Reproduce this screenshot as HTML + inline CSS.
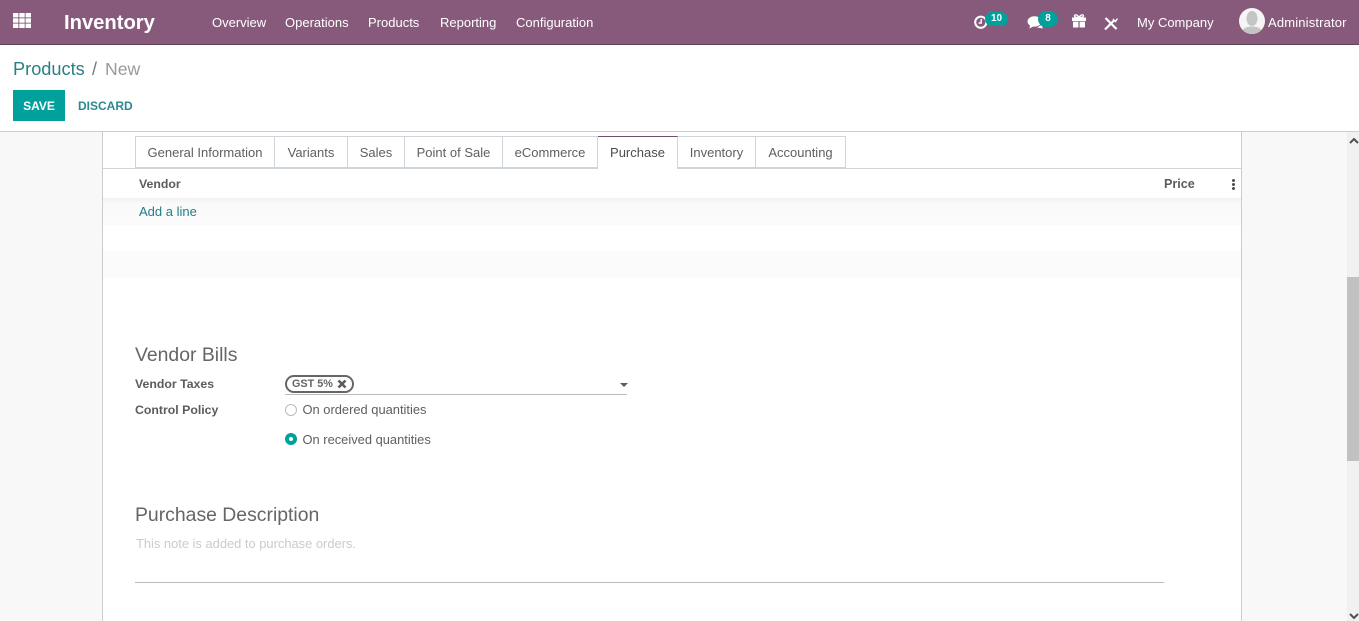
<!DOCTYPE html>
<html lang="en">
<head>
<meta charset="utf-8">
<title>Products / New</title>
<style>
html,body{margin:0;padding:0;width:1359px;height:621px;overflow:hidden;background:#fff;}
body{font-family:"Liberation Sans",sans-serif;font-size:13px;color:#4c4c4c;position:relative;}
.a{position:absolute;white-space:nowrap;}
.box{position:absolute;}
.nav{color:#fff;font-size:13px;top:15px;line-height:16px;}
.tab{position:absolute;top:136px;height:32px;box-sizing:border-box;border:1px solid #ced4da;border-left:0;background:#fff;text-align:center;line-height:32px;color:#5f5f5f;font-size:13px;}
.b{font-weight:bold;color:#5f5a5c;font-size:12.3px;line-height:14px;}
.h{font-size:19.4px;color:#666;line-height:24px;}
</style>
</head>
<body>
<!-- content background -->
<div class="box" style="left:0;top:132px;width:1359px;height:489px;background:#f8f8f8;"></div>
<div class="box" style="left:102px;top:132px;width:1138px;height:489px;background:#fff;border-left:1px solid #ccc;border-right:1px solid #ccc;box-sizing:content-box;"></div>

<!-- top bar -->
<div class="box" style="left:0;top:0;width:1359px;height:45px;background:#875a7b;border-bottom:1px solid #5f4558;box-sizing:border-box;"></div>
<svg class="box" style="left:13px;top:13px;" width="18" height="15" viewBox="0 0 18 15" fill="#fff">
<rect x="0" y="0" width="5.4" height="4.4"/><rect x="6.3" y="0" width="5.4" height="4.4"/><rect x="12.6" y="0" width="5.4" height="4.4"/>
<rect x="0" y="5.3" width="5.4" height="4.4"/><rect x="6.3" y="5.3" width="5.4" height="4.4"/><rect x="12.6" y="5.3" width="5.4" height="4.4"/>
<rect x="0" y="10.6" width="5.4" height="4.4"/><rect x="6.3" y="10.6" width="5.4" height="4.4"/><rect x="12.6" y="10.6" width="5.4" height="4.4"/>
</svg>
<div class="a" style="left:64px;top:10px;color:#fff;font-size:20.2px;font-weight:bold;line-height:27px;">Inventory</div>
<div class="a nav" style="left:212px;">Overview</div>
<div class="a nav" style="left:285px;">Operations</div>
<div class="a nav" style="left:368px;">Products</div>
<div class="a nav" style="left:440px;">Reporting</div>
<div class="a nav" style="left:516px;">Configuration</div>

<!-- systray -->
<svg class="box" style="left:974px;top:15px;" width="14" height="14" viewBox="0 0 14 14" fill="none" stroke="#fff">
<circle cx="6.8" cy="7.2" r="5.6" stroke-width="2"/>
<path d="M7.2 4V8H4.6" stroke-width="1.4"/>
</svg>
<div class="a" style="left:985px;top:12px;width:23px;height:14px;border-radius:7px;background:#00a09d;color:#fff;font-size:10px;font-weight:bold;text-align:center;line-height:14px;">10</div>
<svg class="box" style="left:1027px;top:15px;" width="18" height="15" viewBox="0 0 18 15" fill="#fff">
<ellipse cx="7.5" cy="6.5" rx="7" ry="5.2"/>
<path d="M3 10L2.500 13.500L7 11Z"/>
<path d="M10 12.500L16 13.500L14.500 10Z"/>
</svg>
<div class="a" style="left:1038px;top:11px;width:20px;height:16px;border-radius:8px;background:#00a09d;color:#fff;font-size:10px;font-weight:bold;text-align:center;line-height:16px;">8</div>
<svg class="box" style="left:1072px;top:14px;" width="14" height="14" viewBox="0 0 14 14" fill="#fff">
<rect x="0" y="3.5" width="14" height="3.5"/>
<rect x="1" y="7.6" width="5.4" height="5.9"/>
<rect x="7.6" y="7.6" width="5.4" height="5.9"/>
<path d="M7 3.5C5.500 .5 2.500 0 2.500 2C2.500 3.200 4 3.500 7 3.500C10 3.500 11.500 3.200 11.500 2C11.500 0 8.500 .5 7 3.500Z" fill="none" stroke="#fff" stroke-width="1.3"/>
</svg>
<svg class="box" style="left:1104px;top:17px;" width="14" height="13" viewBox="0 0 14 13" fill="none" stroke="#fff">
<path d="M1 12.500L10.500 3" stroke-width="2.2"/>
<path d="M9 2L11.500 4.500L13.500 1.500" stroke-width="1.4"/>
<path d="M1.500 1L12.500 12" stroke-width="2.2"/>
</svg>
<div class="a nav" style="left:1137px;">My Company</div>
<div class="box" style="left:1239px;top:8px;width:26px;height:26px;border-radius:50%;background:#f5f5f5;overflow:hidden;">
<svg width="26" height="26" viewBox="0 0 26 26"><ellipse cx="13" cy="10.500" rx="5.500" ry="7.500" fill="#c4c4c4"/><path d="M2 26C3 20 8 18.500 13 18.500S23 20 24 26Z" fill="#c4c4c4"/></svg>
</div>
<div class="a nav" style="left:1268px;letter-spacing:.16px;">Administrator</div>

<!-- control panel -->
<div class="box" style="left:0;top:45px;width:1359px;height:87px;background:#fff;border-bottom:1px solid #ccc;box-sizing:border-box;"></div>
<div class="a" style="left:13px;top:57px;font-size:18.2px;line-height:24px;color:#2b7f85;">Products</div>
<div class="a" style="left:92px;top:57px;font-size:18px;line-height:24px;color:#777;">/</div>
<div class="a" style="left:105px;top:57px;font-size:17.6px;line-height:24px;color:#999;">New</div>
<div class="a" style="left:13px;top:90px;width:52px;height:31px;background:#00a09d;color:#fff;font-size:12px;font-weight:bold;text-align:center;line-height:32px;">SAVE</div>
<div class="a" style="left:78px;top:90px;font-size:12px;font-weight:bold;color:#2b8a90;line-height:32px;">DISCARD</div>

<!-- tabs -->
<div class="box" style="left:103px;top:168px;width:1138px;height:1px;background:#ced4da;"></div>
<div class="tab" style="left:135px;width:140px;border-left:1px solid #ced4da;">General Information</div>
<div class="tab" style="left:275px;width:73px;">Variants</div>
<div class="tab" style="left:348px;width:57px;">Sales</div>
<div class="tab" style="left:405px;width:98px;">Point of Sale</div>
<div class="tab" style="left:503px;width:95px;">eCommerce</div>
<div class="tab" style="left:598px;width:80px;height:33px;border-top:1px solid #6f4f67;border-bottom:0;border-left:0;color:#4c4c4c;">Purchase</div>
<div class="tab" style="left:678px;width:78px;">Inventory</div>
<div class="tab" style="left:756px;width:90px;">Accounting</div>

<!-- vendor table -->
<div class="a b" style="left:139px;top:177px;">Vendor</div>
<div class="a b" style="left:1164px;top:177px;font-size:12.6px;">Price</div>
<div class="box" style="left:1232px;top:179px;width:3px;height:3px;background:#4c4c4c;border-radius:50%;box-shadow:0 4px 0 #4c4c4c,0 8px 0 #4c4c4c;"></div>
<div class="box" style="left:103px;top:198px;width:1138px;height:27px;background:linear-gradient(#f1f1f1 0,#fafafa 6px,#fbfbfb 100%);"></div>
<div class="box" style="left:103px;top:251px;width:1138px;height:27px;background:#fbfbfb;"></div>
<div class="a" style="left:139px;top:204px;color:#1f7f85;font-size:13px;line-height:15px;">Add a line</div>

<!-- vendor bills -->
<div class="a h" style="left:135px;top:343px;">Vendor Bills</div>
<div class="a b" style="left:135px;top:377px;">Vendor Taxes</div>
<div class="a" style="left:285px;top:375px;width:69px;height:18px;box-sizing:border-box;border:2px solid #6b6467;border-radius:9px;"></div>
<div class="a" style="left:292px;top:377px;font-size:10.8px;font-weight:bold;color:#666;line-height:14px;">GST 5%</div>
<svg class="box" style="left:337px;top:379px;" width="10" height="10" viewBox="0 0 10 10"><path d="M1.500 1.500L8.500 8.500M8.500 1.500L1.500 8.500" stroke="#5f5a5c" stroke-width="2.6"/></svg>
<div class="box" style="left:285px;top:394px;width:342px;height:1px;background:#bbb;"></div>
<div class="box" style="left:620px;top:383px;width:0;height:0;border-left:4px solid transparent;border-right:4px solid transparent;border-top:4px solid #5f5a5c;"></div>

<div class="a b" style="left:135px;top:403px;">Control Policy</div>
<div class="box" style="left:285px;top:404px;width:12px;height:12px;box-sizing:border-box;border:1px solid #bbb;border-radius:50%;background:#fff;"></div>
<div class="a" style="left:302.500px;top:402px;line-height:15px;color:#5f5f5f;font-size:12.9px;">On ordered quantities</div>
<div class="box" style="left:285px;top:433px;width:12px;height:12px;border-radius:50%;background:#00a09d;"></div>
<div class="box" style="left:289px;top:437px;width:4px;height:4px;border-radius:50%;background:#fff;"></div>
<div class="a" style="left:302.500px;top:432px;line-height:15px;color:#5f5f5f;font-size:12.9px;">On received quantities</div>

<!-- purchase description -->
<div class="a h" style="left:135px;top:503px;">Purchase Description</div>
<div class="a" style="left:136px;top:536px;font-size:12.9px;line-height:15px;color:#c9cccc;">This note is added to purchase orders.</div>
<div class="box" style="left:135px;top:582px;width:1029px;height:1px;background:#bbb;"></div>

<!-- scrollbar -->
<div class="box" style="left:1347px;top:132px;width:12px;height:489px;background:#f1f1f1;"></div>
<div class="box" style="left:1347px;top:277px;width:12px;height:184px;background:#c1c1c1;"></div>
<svg class="box" style="left:1348px;top:136px;" width="12" height="10" viewBox="0 0 12 10"><path d="M2 7L6 3L10 7" fill="none" stroke="#505050" stroke-width="2"/></svg>
<svg class="box" style="left:1348px;top:612px;" width="12" height="9" viewBox="0 0 12 9"><path d="M2 2L6 6L10 2" fill="none" stroke="#505050" stroke-width="2"/></svg>
</body>
</html>
